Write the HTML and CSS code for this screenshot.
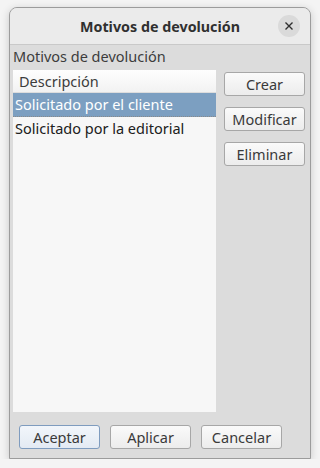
FILE: index.html
```html
<!DOCTYPE html>
<html lang="es">
<head>
  <meta charset="UTF-8" />
  <title>Motivos de devolución</title>
  <meta name="viewport" content="width=device-width, initial-scale=1.0" />
  <link rel="stylesheet" href="styles.css">
</head>
<body>
  <div class="window">
    <header class="titlebar">
      <span></span>
      <h1>Motivos de devolución</h1>
      <button class="close" aria-label="Cerrar">
        <svg width="10" height="10" viewBox="0 0 10 10">
          <path d="M1.5 1.5 L8.5 8.5 M8.5 1.5 L1.5 8.5" stroke="#2e2e2e" stroke-width="1.4" />
        </svg>
      </button>
    </header>

    <div class="content">
      <div class="group-label">Motivos de devolución</div>

      <div class="main">
        <div class="list">
          <div class="list-header">Descripción</div>
          <div class="row selected">Solicitado por el cliente</div>
          <div class="row">Solicitado por la editorial</div>
        </div>

        <div class="side-buttons">
          <button class="btn">Crear</button>
          <button class="btn">Modificar</button>
          <button class="btn">Eliminar</button>
        </div>
      </div>

      <div class="dialog-buttons">
        <button class="btn default">Aceptar</button>
        <button class="btn">Aplicar</button>
        <button class="btn">Cancelar</button>
      </div>
    </div>
  </div>
</body>
</html>
```

FILE: styles.css
```css
body {
  margin: 0;
  background-color: #f4f4f4;
  font-family: 'Noto Sans', 'DejaVu Sans', sans-serif;
  font-size: 14.5px;
  color: #3c3c3c;
}

.window {
  width: 300px;
  height: 450px;
  margin: 7px 0 0 9px;
  border: 1px solid #9c9c9c;
  border-radius: 8px 8px 0 0;
  box-shadow: 0 2px 8px rgba(0,0,0,0.18);
  display: flex;
  flex-direction: column;
  overflow: hidden;
  background: #dcdcdc;
}

.titlebar {
  height: 36px;
  background: #ebebeb;
  border-bottom: 1px solid #c9c9c9;
  display: grid;
  grid-template-columns: 40px 1fr 40px;
  align-items: center;
}

.titlebar h1 {
  margin: 0;
  text-align: center;
  font-size: 14.3px;
  font-weight: bold;
  color: #303030;
}

.close {
  width: 22px;
  height: 22px;
  border-radius: 50%;
  border: none;
  background: #dadada;
  padding: 0;
  display: flex;
  align-items: center;
  justify-content: center;
  margin-left: 8px;
}

.content {
  flex: 1;
  display: flex;
  flex-direction: column;
  padding: 2px 5px 0 3px;
}

.group-label {
  height: 18px;
  line-height: 18px;
  color: #3c3c3c;
}

.main {
  display: flex;
  gap: 8px;
  margin-top: 5px;
  height: 342px;
}

.list {
  width: 203px;
  background: #f7f7f7;
  display: flex;
  flex-direction: column;
}

.list-header {
  height: 22px;
  line-height: 22px;
  padding-left: 6px;
  background: linear-gradient(#fefefe, #f2f2f2);
  border-bottom: 1px solid #dddddd;
  color: #3c3c3c;
}

.row {
  height: 22px;
  line-height: 22px;
  padding-left: 2px;
  color: #202020;
}

.row.selected {
  background: #7c9fc1;
  color: #ffffff;
  border-bottom: 1px dotted #8a8a8a;
  height: 23px;
}

.side-buttons {
  display: flex;
  flex-direction: column;
  gap: 11px;
  padding-top: 2px;
}

.btn {
  font-family: 'Noto Sans', 'DejaVu Sans', sans-serif;
  font-size: 14.5px;
  color: #3a3a3a;
  height: 24px;
  width: 81px;
  padding: 0;
  border: 1px solid #a7a7a7;
  border-radius: 3px;
  background: linear-gradient(#fafafa, #ececec);
}

.btn.default {
  border-color: #7f9cbf;
  background: linear-gradient(#f2f6fb, #e3eaf3);
}

.dialog-buttons {
  display: flex;
  gap: 10px;
  padding: 13px 0 0 6px;
}
```
